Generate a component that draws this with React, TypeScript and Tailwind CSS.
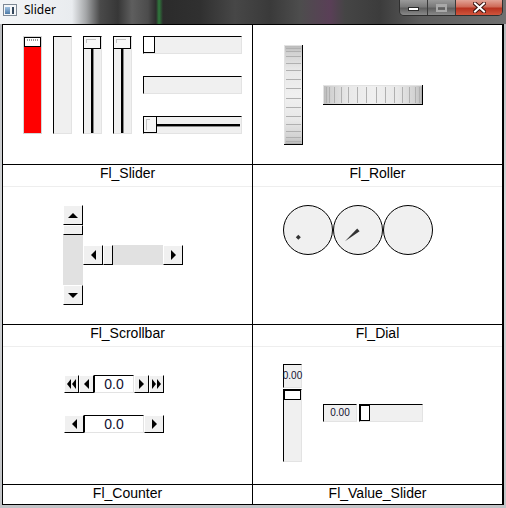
import React from "react";

const sunken =
  "bg-[#f0f0f0] border border-t-black border-l-black border-r-[#e3e3e3] border-b-[#e3e3e3]";
const raised =
  "bg-[#f0f0f0] border border-t-white border-l-white border-r-black border-b-black";

type Dir = "up" | "down" | "left" | "right";

function Tri({ dir }: { dir: Dir }) {
  if (dir === "up" || dir === "down") {
    const pts = dir === "up" ? "0,5 5,0 10,5" : "0,0 5,5 10,0";
    return (
      <svg width="10" height="5" className="block">
        <polygon points={pts} fill="black" />
      </svg>
    );
  }
  const pts = dir === "left" ? "5,0 0,5 5,10" : "0,0 5,5 0,10";
  return (
    <svg width="5" height="10" className="block">
      <polygon points={pts} fill="black" />
    </svg>
  );
}

function DoubleTri({ dir }: { dir: "left" | "right" }) {
  return (
    <svg width="9" height="10" className="block">
      {dir === "left" ? (
        <>
          <polygon points="4,0 0,5 4,10" fill="black" />
          <polygon points="9,0 5,5 9,10" fill="black" />
        </>
      ) : (
        <>
          <polygon points="0,0 4,5 0,10" fill="black" />
          <polygon points="5,0 9,5 5,10" fill="black" />
        </>
      )}
    </svg>
  );
}

function TitleBar() {
  return (
    <div className="h-[24px] shrink-0 flex items-start bg-[linear-gradient(90deg,#f3f5f7_0px,#e9ecef_72px,#a4a6a8_86px,#4a4a4a_100px,#373737_118px,#5e5e5e_132px,#4c4c4c_148px,#2c2c2c_156px,#2f7a3c_159px,#2b2b2b_163px,#303030_200px,#474747_235px,#3a3a3a_270px,#4d4d4d_300px,#5a3f57_330px,#454545_345px,#3c3c3c_380px,#5c5c5c_420px,#707070_506px)]">
      <div className="h-[20px] flex items-center pl-[3px] gap-[7px]">
        <svg width="14" height="12" className="block">
          <defs>
            <linearGradient id="ic" x1="0" y1="0" x2="0" y2="1">
              <stop offset="0" stopColor="#9fc1e2" />
              <stop offset="1" stopColor="#4d7aa6" />
            </linearGradient>
          </defs>
          <rect x="0.5" y="0.5" width="13" height="11" fill="#f4f6f8" stroke="#7d8894" />
          <rect x="2" y="3" width="5" height="7" fill="url(#ic)" />
          <rect x="9" y="3" width="2" height="7" fill="#34475c" />
        </svg>
        <span className="font-['Noto_Sans',sans-serif] text-[12px] leading-[16px] text-black">
          Slider
        </span>
      </div>
      <div className="ml-auto mr-[3px] flex h-[16px] rounded-b-[5px] overflow-hidden border border-t-0 border-[#2f2f2f]">
        <div className="w-[28px] flex items-center justify-center border-r border-[#3a3a3a] bg-[linear-gradient(180deg,#9a9a9a,#7a7a7a_45%,#5f5f5f_55%,#8a8a8a)]">
          <div className="w-[11px] h-[4px] mt-[3px] bg-white border border-[#2a2a2a]" />
        </div>
        <div className="w-[28px] flex items-center justify-center border-r border-[#3a3a3a] bg-[linear-gradient(180deg,#9a9a9a,#7a7a7a_45%,#5f5f5f_55%,#8a8a8a)]">
          <div className="w-[11px] h-[8px] border-2 border-t-[3px] border-[#a9a9a9]" />
        </div>
        <div className="w-[46px] flex items-center justify-center bg-[linear-gradient(180deg,#e2a396,#cf6a58_45%,#b8321f_55%,#d0553d)]">
          <svg width="13" height="11" className="block">
            <path d="M2 1.5 L11 9.5 M11 1.5 L2 9.5" stroke="#3b1410" strokeWidth="4" strokeLinecap="square" />
            <path d="M2 1.5 L11 9.5 M11 1.5 L2 9.5" stroke="white" strokeWidth="2" strokeLinecap="square" />
          </svg>
        </div>
      </div>
    </div>
  );
}

function FillSlider({ red }: { red?: boolean }) {
  if (red) {
    return (
      <div className="w-[19px] h-[98px] flex flex-col border border-[#d6d6d6] bg-[#ff0000]">
        <div className="h-[10px] bg-white border border-black">
          <div className="mx-[2px] mt-[1px] h-[2px] bg-[repeating-linear-gradient(90deg,#9a9a9a_0px,#9a9a9a_1px,transparent_1px,transparent_2px)]" />
        </div>
      </div>
    );
  }
  return <div className={`w-[19px] h-[98px] ${sunken}`} />;
}

function NiceVSlider() {
  return (
    <div className={`w-[19px] h-[98px] flex flex-col ${sunken}`}>
      <div className="-mt-px -ml-px w-[18px] h-[13px] shrink-0 bg-[#f7f7f7] border border-black pt-[2px] pl-[2px]">
        <div className="w-[10px] h-[4px] border-l border-t border-[#c4c4c4]" />
      </div>
      <div className="ml-[7px] w-[3px] flex-1 bg-black border-r border-[#8a8a8a]" />
    </div>
  );
}

function HSlider({ kind }: { kind: "plain" | "fill" | "nice" }) {
  return (
    <div className={`w-[99px] h-[18px] flex ${sunken}`}>
      {kind === "plain" && (
        <div className="-mt-px -ml-px w-[12px] h-[17px] bg-white border border-black" />
      )}
      {kind === "nice" && (
        <>
          <div className="-mt-px -ml-px w-[14px] h-[17px] shrink-0 bg-[#f7f7f7] border border-black pt-[2px] pl-[2px]">
            <div className="w-[4px] h-[11px] border-l border-t border-[#c4c4c4]" />
          </div>
          <div className="self-center mr-[1px] h-[3px] flex-1 bg-black border-b border-[#8a8a8a]" />
        </>
      )}
    </div>
  );
}

function Roller({ w, h, vertical }: { w: number; h: number; vertical: boolean }) {
  const len = vertical ? h : w;
  const R = len / 2;
  const lines: number[] = [];
  for (let k = -7; k <= 7; k++) {
    const a = k * 0.2 + 0.06;
    if (Math.abs(a) >= 1.5) continue;
    lines.push(Math.round(R + (R - 2) * Math.sin(a)) + 0.5);
  }
  const id = vertical ? "rollv" : "rollh";
  return (
    <svg width={w} height={h} className="block">
      <defs>
        <linearGradient id={id} x1="0" y1="0" x2={vertical ? "0" : "1"} y2={vertical ? "1" : "0"}>
          <stop offset="0" stopColor="#b8b8b8" />
          <stop offset="0.08" stopColor="#d2d2d2" />
          <stop offset="0.25" stopColor="#e8e8e8" />
          <stop offset="0.5" stopColor="#f0f0f0" />
          <stop offset="0.75" stopColor="#e8e8e8" />
          <stop offset="0.92" stopColor="#d2d2d2" />
          <stop offset="1" stopColor="#b8b8b8" />
        </linearGradient>
      </defs>
      <rect width={w} height={h} fill={`url(#${id})`} />
      {lines.map((p, i) =>
        vertical ? (
          <line key={i} x1="2" x2={w - 2} y1={p} y2={p} stroke="#b0b0b0" />
        ) : (
          <line key={i} y1="2" y2={h - 2} x1={p} x2={p} stroke="#b0b0b0" />
        )
      )}
      <line x1="0" x2={w} y1="0.5" y2="0.5" stroke="#e2e2e2" />
      <line x1="0.5" x2="0.5" y1="0" y2={h} stroke="#e2e2e2" />
      <line x1={w - 0.5} x2={w - 0.5} y1="0" y2={h} stroke="black" />
      <line x1="0" x2={w} y1={h - 0.5} y2={h - 0.5} stroke="black" />
    </svg>
  );
}

function Dial({ kind }: { kind: "dot" | "line" | "fill" }) {
  return (
    <svg width="50" height="50" className="block">
      <circle cx="25" cy="25" r="24.5" fill="#f0f0f0" stroke="black" />
      {kind === "dot" && <polygon points="15.3,29.8 17.8,32.3 15.3,34.8 12.8,32.3" fill="#333" />}
      {kind === "line" && <polygon points="26.6,26.2 24.2,23.6 12,36.3" fill="#333" />}
    </svg>
  );
}

function Counter({ simple }: { simple?: boolean }) {
  return (
    <div className="flex h-[18px]">
      {!simple && (
        <div className={`${raised} w-[15px] flex items-center justify-center`}>
          <DoubleTri dir="left" />
        </div>
      )}
      <div className={`${raised} ${simple ? "w-[20px]" : "w-[15px]"} flex items-center justify-center`}>
        <Tri dir="left" />
      </div>
      <div
        className={`${simple ? "w-[60px]" : "w-[40px]"} bg-white border border-t-black border-l-black border-r-[#e3e3e3] border-b-[#e3e3e3] text-center text-[14px] leading-[16px] text-[#101030]`}
      >
        0.0
      </div>
      <div className={`${raised} ${simple ? "w-[20px]" : "w-[15px]"} flex items-center justify-center`}>
        <Tri dir="right" />
      </div>
      {!simple && (
        <div className={`${raised} w-[15px] flex items-center justify-center`}>
          <DoubleTri dir="right" />
        </div>
      )}
    </div>
  );
}

function Label({ text, last }: { text: string; last?: boolean }) {
  return (
    <div
      className={`${last ? "h-[20px]" : "h-[22px]"} border-t border-black text-center text-[14px] leading-4 text-black`}
    >
      {text}
    </div>
  );
}

function LeftColumn() {
  return (
    <div className="w-[250px] border-r border-black flex flex-col">
      <div className="h-[139px] flex items-start gap-[11px] pl-[20px] pt-[11px]">
        <FillSlider red />
        <FillSlider />
        <NiceVSlider />
        <NiceVSlider />
        <div className="flex flex-col gap-[22px]">
          <HSlider kind="plain" />
          <HSlider kind="fill" />
          <HSlider kind="nice" />
        </div>
      </div>
      <Label text="Fl_Slider" />
      <div className="h-[138px] border-t border-[#eeeeee] flex items-start pl-[60px] pt-[18px]">
        <div className="w-[20px] h-[100px] flex flex-col bg-[#e1e1e1]">
          <div className={`${raised} h-[20px] flex items-center justify-center`}>
            <Tri dir="up" />
          </div>
          <div className={`${raised} h-[10px]`} />
          <div className="flex-1" />
          <div className={`${raised} h-[20px] flex items-center justify-center`}>
            <Tri dir="down" />
          </div>
        </div>
        <div className="mt-[40px] w-[100px] h-[20px] flex bg-[#e1e1e1]">
          <div className={`${raised} w-[20px] flex items-center justify-center`}>
            <Tri dir="left" />
          </div>
          <div className={`${raised} w-[10px]`} />
          <div className="flex-1" />
          <div className={`${raised} w-[20px] flex items-center justify-center`}>
            <Tri dir="right" />
          </div>
        </div>
      </div>
      <Label text="Fl_Scrollbar" />
      <div className="h-[138px] border-t border-[#eeeeee] flex flex-col gap-[22px] pl-[61px] pt-[28px]">
        <Counter />
        <Counter simple />
      </div>
      <Label text="Fl_Counter" last />
    </div>
  );
}

function RightColumn() {
  return (
    <div className="w-[249px] flex flex-col">
      <div className="h-[139px] flex items-start gap-[20px] pl-[31px] pt-[20px]">
        <Roller w={19} h={100} vertical />
        <div className="mt-[40px]">
          <Roller w={100} h={20} vertical={false} />
        </div>
      </div>
      <Label text="Fl_Roller" />
      <div className="h-[138px] border-t border-[#eeeeee] flex items-start pl-[30px] pt-[18px]">
        <Dial kind="dot" />
        <Dial kind="line" />
        <Dial kind="fill" />
      </div>
      <Label text="Fl_Dial" />
      <div className="h-[138px] border-t border-[#eeeeee] flex items-start gap-[21px] pl-[30px] pt-[17px]">
        <div className="w-[19px] h-[98px] flex flex-col">
          <div className={`${sunken} h-[24px] flex items-center justify-center text-[10px] leading-none whitespace-nowrap text-[#101030]`}>
            0.00
          </div>
          <div className={`${sunken} mt-[1px] flex-1`}>
            <div className="w-full h-[10px] bg-white border border-black" />
          </div>
        </div>
        <div className="mt-[40px] flex gap-[2px] h-[18px]">
          <div className={`${sunken} w-[34px] flex items-center justify-center text-[10px] leading-none text-[#101030]`}>
            0.00
          </div>
          <div className={`${sunken} w-[64px]`}>
            <div className="w-[10px] h-full bg-white border border-black" />
          </div>
        </div>
      </div>
      <Label text="Fl_Value_Slider" last />
    </div>
  );
}

export default function App() {
  return (
    <div className="w-[506px] h-[508px] overflow-hidden flex flex-col bg-[linear-gradient(180deg,#b5b7ba,#d4d6d8_40%,#c2c4c7)] font-['Liberation_Sans',Arial,sans-serif]">
      <TitleBar />
      <div className="flex pl-[2px]">
        <div className="w-[502px] h-[481px] flex bg-white border border-black border-r-2">
          <LeftColumn />
          <RightColumn />
        </div>
      </div>
    </div>
  );
}
